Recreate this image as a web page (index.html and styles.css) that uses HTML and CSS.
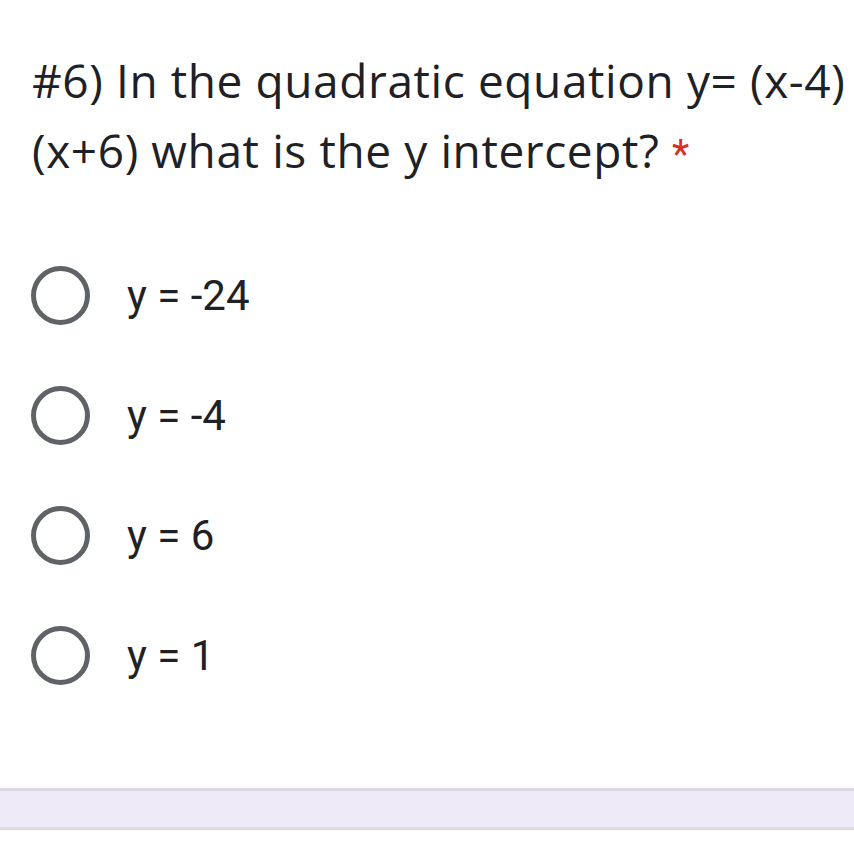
FILE: index.html
```html
<!DOCTYPE html>
<html>
<head>
<meta charset="utf-8">
<link rel="stylesheet" href="styles.css">
</head>
<body>
<div class="page">
  <div class="question">
    <div class="title">#6) In the quadratic equation y= (x-4) (x+6) what is the y intercept? <span class="req">*</span></div>
    <div class="options">
      <div class="option"><span class="radio"></span><span class="label">y = -24</span></div>
      <div class="option"><span class="radio"></span><span class="label">y = -4</span></div>
      <div class="option"><span class="radio"></span><span class="label">y = 6</span></div>
      <div class="option"><span class="radio"></span><span class="label">y = 1</span></div>
    </div>
  </div>
  <div class="band"></div>
</div>
</body>
</html>
```
FILE: styles.css
```css
html, body {
  margin: 0;
  padding: 0;
  background: #ffffff;
}
.page {
  width: 854px;
  height: 853px;
  overflow: hidden;
  display: flex;
  flex-direction: column;
}
.question {
  padding: 45px 4px 0 32px;
}
.title {
  font-family: "Open Sans", sans-serif;
  font-size: 46px;
  line-height: 70px;
  color: #202124;
  letter-spacing: 0.6px;
}
.req {
  font-family: Roboto, sans-serif;
  font-size: 40px;
  line-height: 1;
  color: #d93025;
}
.options {
  margin-top: 50px;
  display: flex;
  flex-direction: column;
}
.option {
  height: 120px;
  display: flex;
  align-items: center;
}
.radio {
  width: 49px;
  height: 49px;
  border: 5px solid #5f6368;
  border-radius: 50%;
  flex: none;
  margin-left: -1px;
}
.label {
  margin-left: 37px;
  font-family: Roboto, sans-serif;
  font-size: 42px;
  color: #202124;
}
.band {
  margin-top: auto;
  margin-bottom: 23px;
  height: 36px;
  background: #eeeaf8;
  border-top: 3px solid #dcd8e2;
  border-bottom: 3px solid #dcdce0;
}
```
